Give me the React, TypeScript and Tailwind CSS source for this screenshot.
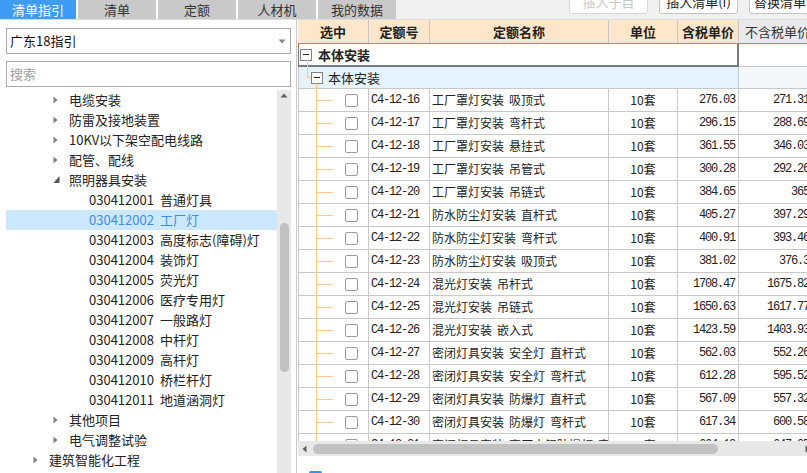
const tabs = ["清单指引", "清单", "定额", "人材机", "我的数据"];

type TreeRow = { level: 1 | 2 | 3; label: string; code?: string; open?: boolean; selected?: boolean };

const tree: TreeRow[] = [
  { level: 2, label: "电缆安装" },
  { level: 2, label: "防雷及接地装置" },
  { level: 2, label: "10KV以下架空配电线路" },
  { level: 2, label: "配管、配线" },
  { level: 2, label: "照明器具安装", open: true },
  { level: 3, code: "030412001", label: "普通灯具" },
  { level: 3, code: "030412002", label: "工厂灯", selected: true },
  { level: 3, code: "030412003", label: "高度标志(障碍)灯" },
  { level: 3, code: "030412004", label: "装饰灯" },
  { level: 3, code: "030412005", label: "荧光灯" },
  { level: 3, code: "030412006", label: "医疗专用灯" },
  { level: 3, code: "030412007", label: "一般路灯" },
  { level: 3, code: "030412008", label: "中杆灯" },
  { level: 3, code: "030412009", label: "高杆灯" },
  { level: 3, code: "030412010", label: "桥栏杆灯" },
  { level: 3, code: "030412011", label: "地道涵洞灯" },
  { level: 2, label: "其他项目" },
  { level: 2, label: "电气调整试验" },
  { level: 1, label: "建筑智能化工程" },
];

const indent = { 1: "pl-[27px]", 2: "pl-[47px]", 3: "pl-[83px]" };

const rows = [
  ["C4-12-16", "工厂罩灯安装 吸顶式", "276.03", "271.31"],
  ["C4-12-17", "工厂罩灯安装 弯杆式", "296.15", "288.69"],
  ["C4-12-18", "工厂罩灯安装 悬挂式", "361.55", "346.03"],
  ["C4-12-19", "工厂罩灯安装 吊管式", "300.28", "292.26"],
  ["C4-12-20", "工厂罩灯安装 吊链式", "384.65", "365"],
  ["C4-12-21", "防水防尘灯安装 直杆式", "405.27", "397.29"],
  ["C4-12-22", "防水防尘灯安装 弯杆式", "400.91", "393.46"],
  ["C4-12-23", "防水防尘灯安装 吸顶式", "381.02", "376.3"],
  ["C4-12-24", "混光灯安装 吊杆式", "1708.47", "1675.82"],
  ["C4-12-25", "混光灯安装 吊链式", "1650.63", "1617.77"],
  ["C4-12-26", "混光灯安装 嵌入式", "1423.59", "1403.93"],
  ["C4-12-27", "密闭灯具安装 安全灯 直杆式", "562.03", "552.26"],
  ["C4-12-28", "密闭灯具安装 安全灯 弯杆式", "612.28", "595.52"],
  ["C4-12-29", "密闭灯具安装 防爆灯 直杆式", "567.09", "557.32"],
  ["C4-12-30", "密闭灯具安装 防爆灯 弯杆式", "617.34", "600.58"],
  ["C4-12-31", "密闭灯具安装 高压水银防爆灯 直杆式", "664.12", "647.35"],
];

function Caret({ open }: { open?: boolean }) {
  return (
    <svg width="16" height="20" viewBox="0 0 16 20" className="shrink-0">
      {open ? <path d="M6.5 6 L6.5 13 L0.5 13 Z" fill="#555" /> : <path d="M0.5 6.5 L4.5 10 L0.5 13.5 Z" fill="#808080" />}
    </svg>
  );
}

function MinusBox() {
  return (
    <span className="flex h-[12px] w-[12px] shrink-0 items-center justify-center border border-[#808080] bg-white">
      <span className="h-px w-[6px] bg-[#222]" />
    </span>
  );
}

function Name({ text }: { text: string }) {
  return (
    <span className="flex gap-[5px] whitespace-nowrap">
      {text.split(" ").map((p) => (
        <span key={p}>{p}</span>
      ))}
    </span>
  );
}

export default function App() {
  return (
    <div className="flex h-[473px] w-[807px] flex-col overflow-hidden bg-white font-['Noto_Sans_CJK_SC','Noto_Sans',sans-serif] text-[13px] text-[#222]">
      {/* top tabs + toolbar */}
      <div className="flex h-[20px] shrink-0 overflow-hidden border-b border-[#dcdcdc]">
        <div className="flex gap-[2px] bg-white">
          {tabs.map((t, i) => (
            <div
              key={t}
              className={
                i === 0
                  ? "flex w-[76px] items-center justify-center bg-[#3d9cf6] text-white"
                  : "flex w-[78px] items-center justify-center bg-[#c9c9c9] text-[#333]"
              }
            >
              {t}
            </div>
          ))}
        </div>
        <div className="flex flex-1 items-end gap-[11px] bg-[#f0f0f0] pb-[5px] pl-[173px]">
          <div className="flex h-[24px] w-[79px] shrink-0 items-center justify-center rounded-[3px] border border-[#d6d6d6] bg-white text-[#c8c8c8]">插入子目</div>
          <div className="flex h-[24px] w-[79px] shrink-0 items-center justify-center rounded-[3px] border border-[#c4c4c4] bg-white">插入清单(I)</div>
          <div className="flex h-[24px] w-[79px] shrink-0 items-center justify-center rounded-[3px] border border-[#c4c4c4] bg-white">替换清单(R)</div>
        </div>
      </div>

      <div className="flex min-h-0 flex-1">
        {/* left panel */}
        <div className="flex w-[297px] shrink-0 flex-col border-r border-[#c8c8c8]">
          <div className="ml-[6px] mr-[5px] mt-[8px] flex h-[26px] items-center justify-between border border-[#a9a9a9] pl-[3px] pr-[4px]">
            <span className="text-[#111]">广东18指引</span>
            <svg width="8" height="5" viewBox="0 0 8 5">
              <path d="M0.5 0.5 L7.5 0.5 L4 4.5 Z" fill="#888" />
            </svg>
          </div>
          <div className="ml-[6px] mr-[5px] mt-[7px] flex h-[26px] items-center border border-[#a9a9a9] pl-[3px] text-[#a0a0a0]">搜索</div>
          <div className="ml-[6px] mr-[5px] mt-[3px] flex min-h-0 flex-1">
            <div className="flex-1 overflow-hidden">
              {tree.map((r) => (
                <div
                  key={r.label}
                  className={`flex h-[20px] items-center whitespace-nowrap ${indent[r.level]} ${r.selected ? "bg-[#cce8ff] text-[#3b8ee6]" : "text-[#222]"}`}
                >
                  {r.code ? (
                    <>
                      <span className="w-[71px] shrink-0">{r.code}</span>
                      <span>{r.label}</span>
                    </>
                  ) : (
                    <>
                      <Caret open={r.open} />
                      <span>{r.label}</span>
                    </>
                  )}
                </div>
              ))}
            </div>
            <div className="flex w-[14px] shrink-0 flex-col items-center bg-[#e8e8e8]">
              <svg width="8" height="5" viewBox="0 0 8 5" className="mt-[3px]">
                <path d="M0.5 4.5 L7.5 4.5 L4 0.5 Z" fill="#606060" />
              </svg>
              <div className="mt-[125px] h-[149px] w-[9px] rounded-full bg-[#c1c1c1]" />
            </div>
          </div>
        </div>

        {/* right panel */}
        <div className="ml-px flex min-w-0 flex-1 flex-col overflow-hidden">
          {/* header */}
          <div className="flex h-[24px] shrink-0 border-b border-[#5a9be6] font-bold">
            <div className="flex w-[71px] shrink-0 items-center justify-center border-r border-[#c8c8c8] bg-[#fde6c9]">选中</div>
            <div className="flex w-[61px] shrink-0 items-center justify-center border-r border-[#c8c8c8] bg-[#fde6c9]">定额号</div>
            <div className="flex w-[179px] shrink-0 items-center justify-center border-r border-[#c8c8c8] bg-[#fde6c9]">定额名称</div>
            <div className="flex w-[69px] shrink-0 items-center justify-center border-r border-[#c8c8c8] bg-[#fde6c9]">单位</div>
            <div className="flex w-[61px] shrink-0 items-center justify-center border-r border-[#c8c8c8] bg-[#fde6c9]">含税单价</div>
            <div className="flex w-[74px] shrink-0 items-center bg-[#e9e9e9] pl-[6px] font-normal text-[#333]">不含税单价</div>
          </div>

          {/* group 1 */}
          <div className="flex h-[23px] shrink-0">
            <div className="relative flex w-[441px] shrink-0 items-center border-b-2 border-l border-r-2 border-[#7a7a7a] pl-[1px]">
              <MinusBox />
              <span className="ml-[6px] font-bold">本体安装</span>
              <span className="absolute left-[8px] top-[16px] bottom-[-3px] w-px bg-[#fdc983]" />
            </div>
            <div className="w-[74px] shrink-0 border-b border-[#c8c8c8]" />
          </div>

          {/* group 2 */}
          <div className="flex h-[22px] shrink-0 border-b border-[#c8c8c8]">
            <div className="relative flex w-[441px] shrink-0 items-center border-l border-r border-[#c8c8c8] bg-[#e5f3fe] pl-[12px]">
              <span className="absolute left-[8px] top-0 h-[10px] w-px bg-[#fdc983]" />
              <span className="absolute left-[8px] top-[10px] h-px w-[4px] bg-[#fdc983]" />
              <MinusBox />
              <span className="ml-[5px]">本体安装</span>
              <span className="absolute left-[17px] top-[16px] bottom-[-1px] w-px bg-[#fdc983]" />
            </div>
            <div className="w-[74px] shrink-0 bg-[#f4f8fb]" />
          </div>

          {/* body */}
          <div className="h-[352px] shrink-0 overflow-hidden">
            {rows.map((r) => (
              <div key={r[0]} className="flex h-[23px] border-b border-l border-[#c8c8c8]">
                <div className="relative w-[70px] shrink-0 border-r border-[#c8c8c8]">
                  <span className="absolute left-[17px] top-0 bottom-[-1px] w-px bg-[#fdc983]" />
                  <span className="absolute left-[18px] top-[11px] h-px w-[16px] bg-[#fdc983]" />
                  <span className="absolute left-[46px] top-[5px] h-[13px] w-[13px] rounded-[2px] border border-[#9a9a9a] bg-white" />
                </div>
                <div className="flex w-[61px] shrink-0 items-center border-r border-[#c8c8c8] pl-[2px] font-['Liberation_Mono',monospace] text-[12px] tracking-[-1.2px]">{r[0]}</div>
                <div className="flex w-[179px] shrink-0 items-center overflow-hidden border-r border-[#c8c8c8] pl-[2px] text-[12px]">
                  <Name text={r[1]} />
                </div>
                <div className="flex w-[69px] shrink-0 items-center justify-center border-r border-[#c8c8c8] text-[12px]">10套</div>
                <div className="flex w-[61px] shrink-0 items-center justify-end border-r border-[#c8c8c8] pr-[3px] font-['Liberation_Mono',monospace] text-[12px] tracking-[-1.2px]">{r[2]}</div>
                <div className="flex w-[74px] shrink-0 items-center justify-end border-r border-[#c8c8c8] pr-[3px] font-['Liberation_Mono',monospace] text-[12px] tracking-[-1.2px]">{r[3]}</div>
              </div>
            ))}
          </div>

          {/* horizontal scrollbar */}
          <div className="flex h-[15px] shrink-0 items-center bg-[#e8e8e8] pl-[4px]">
            <svg width="5" height="8" viewBox="0 0 5 8">
              <path d="M4.5 0.5 L4.5 7.5 L0.5 4 Z" fill="#606060" />
            </svg>
            <div className="ml-[6px] h-[10px] w-[405px] rounded-full bg-[#c1c1c1]" />
            <div className="flex-1" />
            <svg width="5" height="8" viewBox="0 0 5 8" className="mr-[-3px]">
              <path d="M0.5 0.5 L0.5 7.5 L4.5 4 Z" fill="#606060" />
            </svg>
          </div>

          <div className="flex-1">
            <div className="ml-[11px] mt-[15px] h-[13px] w-[13px] rounded-[2px] bg-[#3c8ee8]" />
          </div>
        </div>
      </div>
    </div>
  );
}
